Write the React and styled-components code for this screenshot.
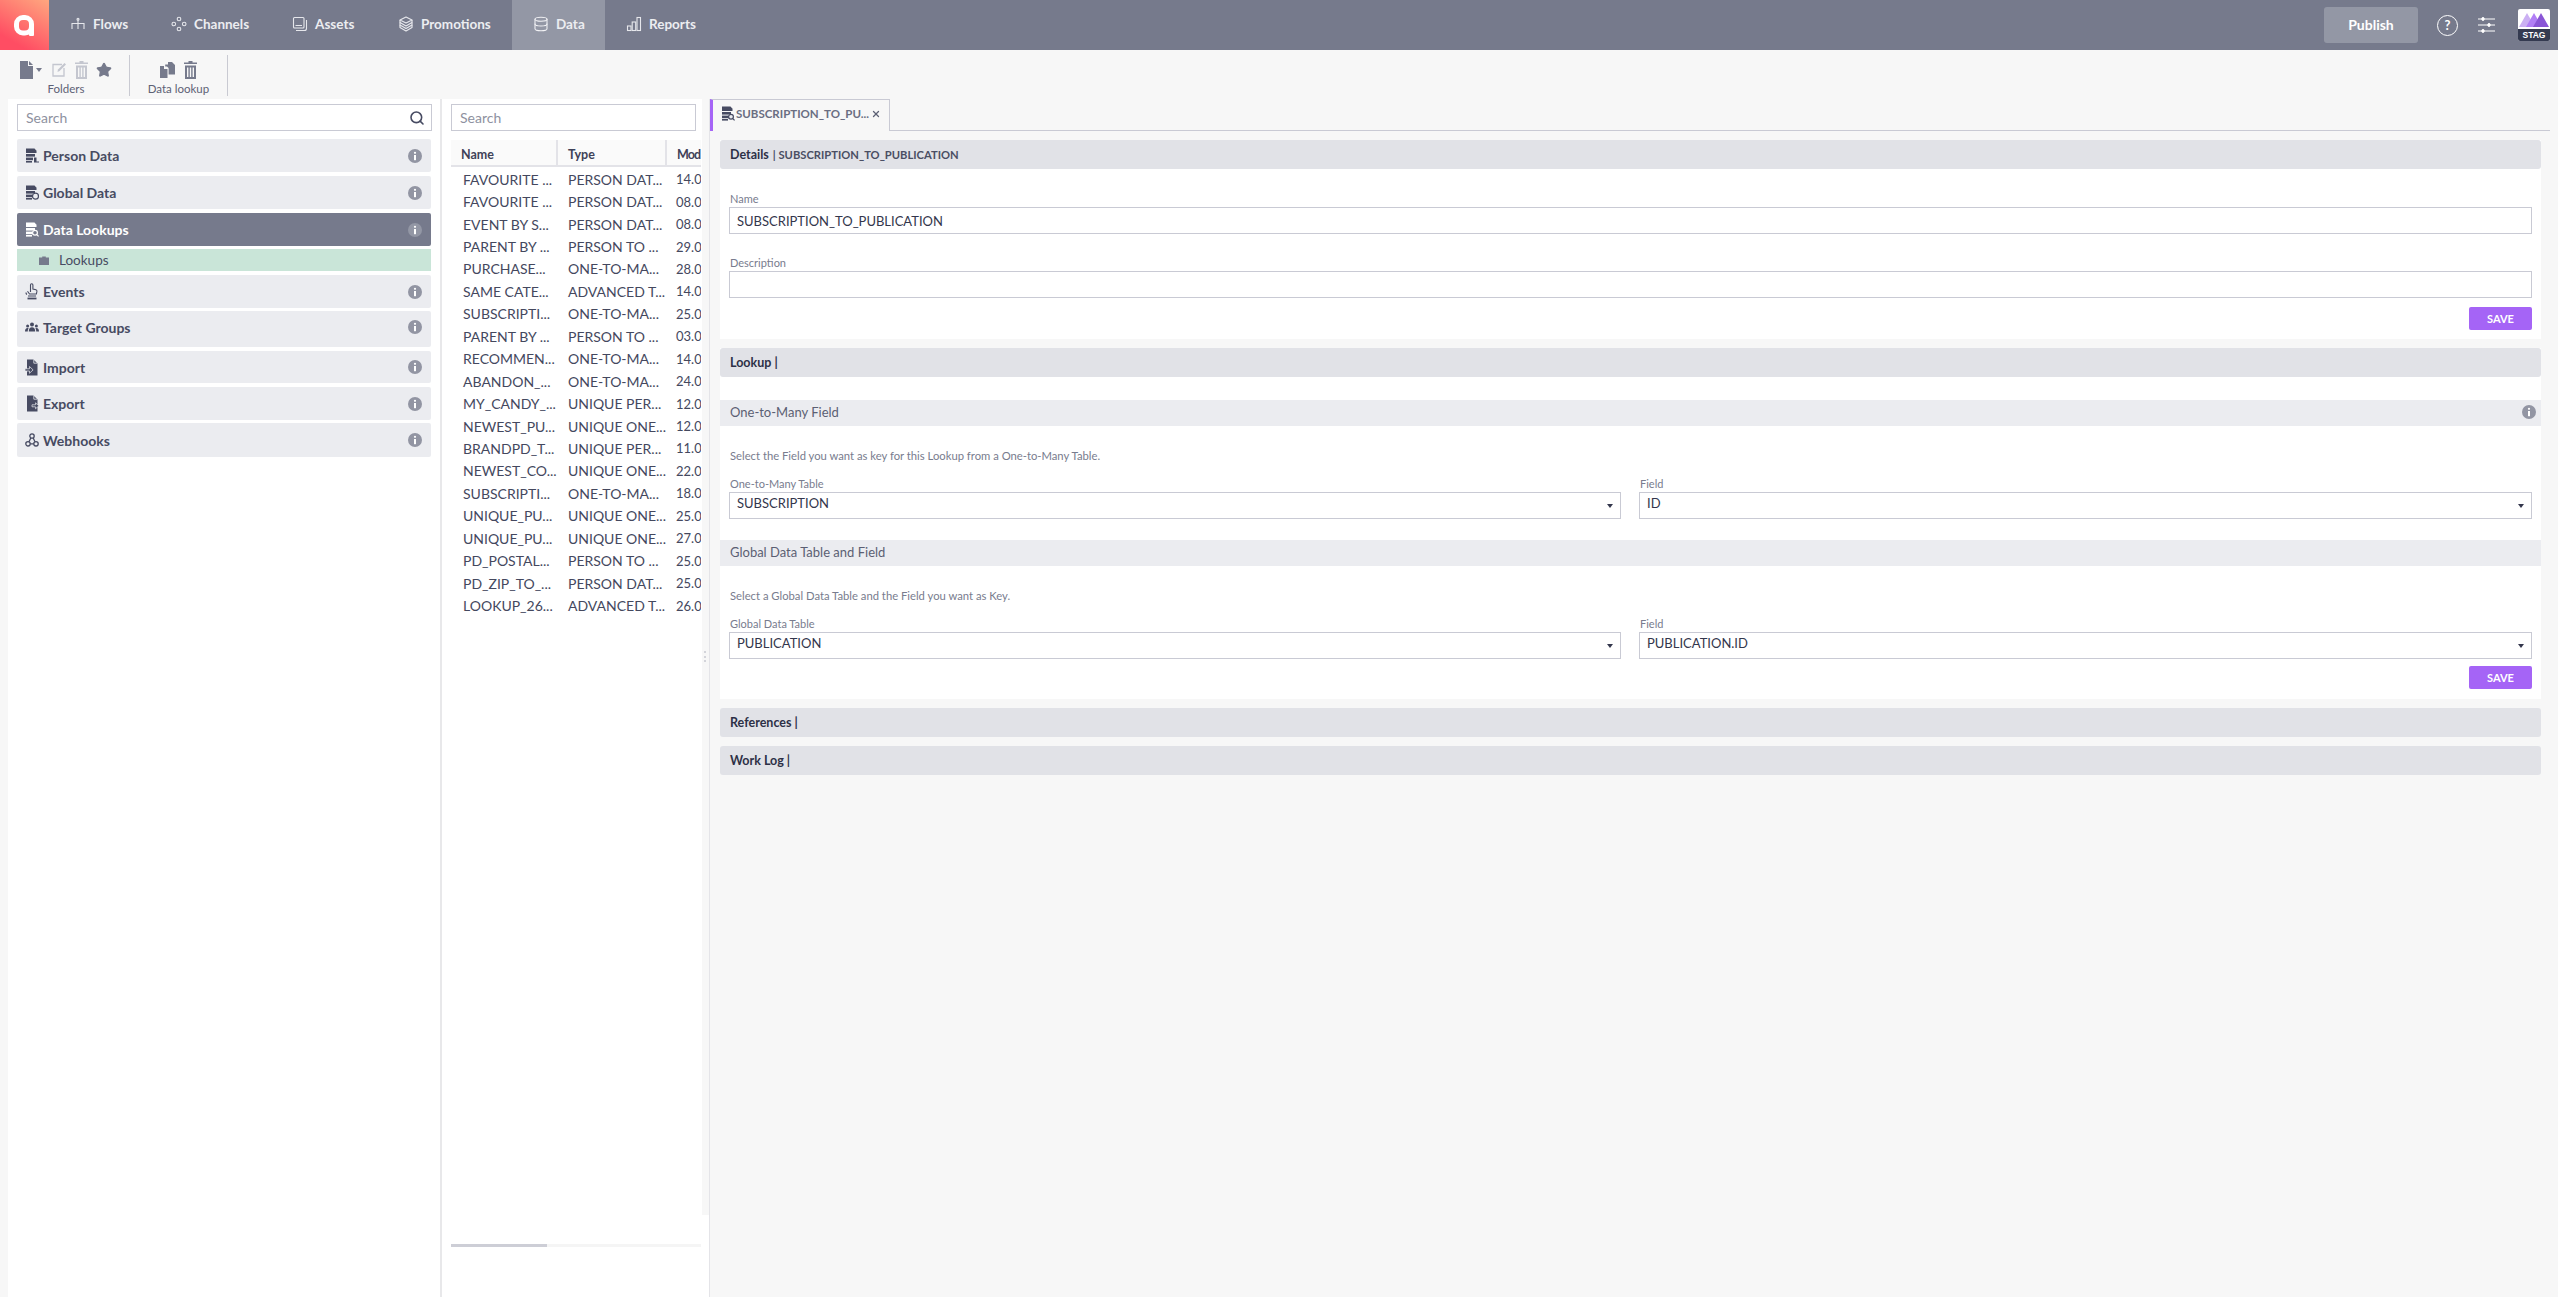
import React from "react";
import styled, { createGlobalStyle } from "styled-components";
import { Search, Database, X, Star } from "lucide-react";

const FONT = `Lato, "Noto Sans", "Liberation Sans", sans-serif`;

const NAV = [
  { label: "Flows", width: 101, icon: "flows" },
  { label: "Channels", width: 121, icon: "channels" },
  { label: "Assets", width: 106, icon: "assets" },
  { label: "Promotions", width: 135, icon: "promotions" },
  { label: "Data", width: 93, icon: "data", active: true },
  { label: "Reports", width: 113, icon: "reports" },
];

const MENU = [
  { label: "Person Data", icon: "person", height: 33 },
  { label: "Global Data", icon: "global", height: 33 },
  { label: "Data Lookups", icon: "lookup", height: 33, active: true },
  { label: "Events", icon: "events", height: 33 },
  { label: "Target Groups", icon: "groups", height: 36, pull: 1, lift: 4 },
  { label: "Import", icon: "import", height: 32 },
  { label: "Export", icon: "export", height: 33 },
  { label: "Webhooks", icon: "hooks", height: 34, pull: 1 },
];

const ROWS = [
  ["FAVOURITE ...", "PERSON DAT...", "14.0"],
  ["FAVOURITE ...", "PERSON DAT...", "08.0"],
  ["EVENT BY S...", "PERSON DAT...", "08.0"],
  ["PARENT BY ...", "PERSON TO ...", "29.0"],
  ["PURCHASE...", "ONE-TO-MA...", "28.0"],
  ["SAME CATE...", "ADVANCED T...", "14.0"],
  ["SUBSCRIPTI...", "ONE-TO-MA...", "25.0"],
  ["PARENT BY ...", "PERSON TO ...", "03.0"],
  ["RECOMMEN...", "ONE-TO-MA...", "14.0"],
  ["ABANDON_...", "ONE-TO-MA...", "24.0"],
  ["MY_CANDY_...", "UNIQUE PER...", "12.0"],
  ["NEWEST_PU...", "UNIQUE ONE...", "12.0"],
  ["BRANDPD_T...", "UNIQUE PER...", "11.0"],
  ["NEWEST_CO...", "UNIQUE ONE...", "22.0"],
  ["SUBSCRIPTI...", "ONE-TO-MA...", "18.0"],
  ["UNIQUE_PU...", "UNIQUE ONE...", "25.0"],
  ["UNIQUE_PU...", "UNIQUE ONE...", "27.0"],
  ["PD_POSTAL...", "PERSON TO ...", "25.0"],
  ["PD_ZIP_TO_...", "PERSON DAT...", "25.0"],
  ["LOOKUP_26...", "ADVANCED T...", "26.0"],
];

const NavIcon = ({ name }) => {
  const p = { width: 16, height: 16, viewBox: "0 0 16 16", fill: "none", stroke: "#e6e7ec", strokeWidth: 1.1 };
  if (name === "flows")
    return (
      <svg {...p}>
        <path d="M2 13V7.5h12V13M8 3.5V13" />
        <circle cx="8" cy="3.2" r="1" />
      </svg>
    );
  if (name === "channels")
    return (
      <svg {...p}>
        <circle cx="8" cy="3" r="1.8" />
        <circle cx="8" cy="13" r="1.8" />
        <circle cx="2.8" cy="8" r="1.8" />
        <circle cx="13.2" cy="8" r="1.8" />
      </svg>
    );
  if (name === "assets")
    return (
      <svg {...p}>
        <rect x="1.5" y="1.5" width="10.5" height="10.5" rx="1" />
        <path d="M4 14.5h8.5a2 2 0 0 0 2-2V4M3.5 9.5h6.5" />
      </svg>
    );
  if (name === "promotions")
    return (
      <svg {...p} strokeWidth="1.2" strokeLinejoin="round">
        <path d="M8 1 14 4 8 7 2 4z" />
        <path d="M2 4v2.5L8 10l6-3.5V4" />
        <path d="M2 6.5V9l6 3.5L14 9V6.5" />
        <path d="M2 9v2.5L8 15l6-3.5V9" />
      </svg>
    );
  if (name === "data") return <Database size={16} color="#f2f2f5" strokeWidth={1.6} />;
  return (
    <svg {...p}>
      <rect x="1.5" y="10" width="3.5" height="4.5" />
      <rect x="6.2" y="6" width="3.5" height="8.5" />
      <rect x="11" y="1.5" width="3.5" height="13" />
    </svg>
  );
};

const MenuIcon = ({ name, light }) => {
  const c = light ? "#ffffff" : "#474b62";
  const bg = light ? "#767a8c" : "#ebecf0";
  if (name === "events")
    return (
      <svg width="14" height="17" viewBox="0 0 14 17" fill="none" stroke={c} strokeWidth="1.1">
        <path d="M5.5 9V2a1.2 1.2 0 0 1 2.4 0v4l3 .8c.8.2 1.1.8 1 1.6L11.4 11H4.5L2.5 8.2" />
        <path d="M1 9.5a2 2 0 0 0 1 2M3 13h8" />
        <path d="M2.5 15.5h9" strokeWidth="1.8" />
      </svg>
    );
  if (name === "groups")
    return (
      <svg width="14" height="10" viewBox="0 0 14 10" fill={c}>
        <circle cx="7" cy="2.6" r="2" />
        <circle cx="2.6" cy="4" r="1.5" />
        <circle cx="11.4" cy="4" r="1.5" />
        <path d="M3.8 9.5c0-3 1.2-4.2 3.2-4.2s3.2 1.2 3.2 4.2zM0 9.5c0-2 .8-3.5 2.6-3.5.4 0 .7.1 1 .2C3 7 2.8 8 2.8 9.5zM14 9.5c0-2-.8-3.5-2.6-3.5-.4 0-.7.1-1 .2.6.8.8 1.8.8 3.3z" />
      </svg>
    );
  if (name === "import" || name === "export")
    return (
      <svg width="14" height="17" viewBox="0 0 14 17" fill={c}>
        <path d="M2 .5h6.5l4 4v12H2z" />
        <path d="M8.8.5v3.7h3.7" stroke={bg} strokeWidth=".8" fill="none" />
        {name === "import" ? (
          <path d="M0 9.8h4.5V7.5l3.6 3.4-3.6 3.4v-2.3H0z" stroke={bg} strokeWidth=".7" />
        ) : (
          <path d="M7 9.8h3.5V7.8l3.3 3-3.3 3v-2H7z" stroke={bg} strokeWidth=".7" />
        )}
      </svg>
    );
  if (name === "hooks")
    return (
      <svg width="14" height="14" viewBox="0 0 14 14" fill="none" stroke={c} strokeWidth="1.3">
        <circle cx="7" cy="3" r="2.2" />
        <circle cx="3" cy="10.8" r="2.2" />
        <circle cx="11" cy="10.8" r="2.2" />
        <path d="M5.8 5 4 8.8M8.2 5 10 8.8M5.2 10.8h3.6" />
      </svg>
    );
  return (
    <svg width="14" height="15" viewBox="0 0 14 15" fill={c}>
      <path d="M1 .5h8.5l2 2.2V5H1z" />
      <rect x="1" y="6" width="9" height="2.6" />
      <rect x="1" y="9.6" width="7" height="2.6" />
      <rect x="1" y="13" width="6" height="1.6" />
      {name === "person" && <path d="M9 9.5h2.5v4H14v1H9z" />}
      {name === "global" && <circle cx="10.5" cy="11.2" r="3" fill={bg} stroke={c} strokeWidth="1.2" />}
      {name === "lookup" && (
        <g fill="none" stroke={c} strokeWidth="1.2">
          <circle cx="10" cy="10.8" r="2.4" fill={bg} />
          <path d="m11.8 12.6 1.8 1.8" />
        </g>
      )}
    </svg>
  );
};

const InfoIcon = ({ light }) => (
  <svg width="14" height="14" viewBox="0 0 14 14">
    <circle cx="7" cy="7" r="7" fill={light ? "#9397a5" : "#9295a3"} />
    <circle cx="7" cy="3.8" r="1.1" fill="#fff" />
    <rect x="6" y="6" width="2" height="5.2" fill="#fff" />
  </svg>
);

const FileIcon = () => (
  <svg width="13" height="18" viewBox="0 0 13 18" fill="#767a8c">
    <path d="M0 0h8v5h5v13H0zM9 0l4 4H9z" />
  </svg>
);

const EditIcon = () => (
  <svg width="15" height="15" viewBox="0 0 15 15" fill="none" stroke="#c4c6cf" strokeWidth="1.3">
    <path d="M10 2.5H1v11.5h11V6" />
    <path d="M5.5 10l.5-2.5L12.5 1 14 2.5 7.6 9z" fill="#c4c6cf" stroke="none" />
  </svg>
);

const TrashIcon = ({ color }) => (
  <svg width="13" height="18" viewBox="0 0 13 18" fill={color}>
    <path d="M4.5 0h4v1.5H13V3H0V1.5h4.5z" />
    <path d="M1 4.5h11V18H1zM3 6.5V16h1.4V6.5zm2.8 0V16h1.4V6.5zm2.8 0V16H10V6.5z" fillRule="evenodd" />
  </svg>
);

const CopyIcon = () => (
  <svg width="15" height="16" viewBox="0 0 15 16" fill="#767a8c">
    <path d="M0 4h4v3h3.5v9H0zM8 0h4l3 3v9.5H8.6V6L7 4.5H5.2V2.5H8z" />
  </svg>
);

const FolderIcon = () => (
  <svg width="10" height="9" viewBox="0 0 10 9" fill="#767a8c">
    <path d="M0 1.5h3.2V.5h3.6v1H10V9H0z" />
  </svg>
);

const GlobalStyle = createGlobalStyle`
  html, body {
    margin: 0;
    padding: 0;
    background: #f7f7f7;
    font-family: ${FONT};
    color: #3f4258;
  }
  * {
    box-sizing: border-box;
  }
`;

const Page = styled.div`
  width: 2558px;
  height: 1297px;
  display: flex;
  flex-direction: column;
  overflow: hidden;
`;

const TopBar = styled.header`
  height: 50px;
  flex: none;
  display: flex;
  align-items: stretch;
  background: #767a8c;
`;

const Logo = styled.div`
  width: 49px;
  display: flex;
  align-items: center;
  justify-content: center;
  background: linear-gradient(30deg, #ff4d63 20%, #ffa77f 100%);
`;

const NavItem = styled.a`
  width: ${(props) => props.$width}px;
  padding: 0 0 2px 21px;
  display: flex;
  align-items: center;
  gap: 7px;
  font-size: 13.5px;
  font-weight: 700;
  color: #ecedf1;
  background: ${(props) => (props.$active ? "#9397a5" : "transparent")};
`;

const TopRight = styled.div`
  margin-left: auto;
  display: flex;
  align-items: center;
`;

const Publish = styled.button`
  width: 94px;
  height: 36px;
  margin-right: 19px;
  padding-bottom: 2px;
  border: 0;
  border-radius: 3px;
  background: #9397a5;
  color: #fff;
  font-family: ${FONT};
  font-size: 14px;
  font-weight: 700;
`;

const HelpIcon = styled.div`
  width: 21px;
  height: 21px;
  margin-right: 20px;
  display: flex;
  align-items: center;
  justify-content: center;
  border: 1.5px solid #fff;
  border-radius: 50%;
  color: #fff;
  font-size: 13px;
  font-weight: 700;
`;

const Stag = styled.div`
  width: 32px;
  height: 32px;
  margin: 0 8px 0 22px;
  display: flex;
  flex-direction: column;
  justify-content: space-between;
  overflow: hidden;
  border-radius: 2px;
  background: #fff;
`;

const StagBand = styled.div`
  height: 12px;
  background: #343a50;
  color: #fff;
  font-family: "Liberation Sans", sans-serif;
  font-size: 8.5px;
  font-weight: 700;
  line-height: 12px;
  text-align: center;
`;

const Toolbar = styled.div`
  height: 49px;
  flex: none;
  display: flex;
  align-items: flex-start;
`;

const ToolGroup = styled.div`
  width: ${(props) => props.$width}px;
  height: 41px;
  margin-top: 5px;
  padding: 5px 0 0 ${(props) => props.$left || 0}px;
  display: flex;
  flex-direction: column;
  align-items: center;
  gap: 3px;
  border-right: 1.5px solid #c9cad2;
`;

const ToolIcons = styled.div`
  height: 19px;
  display: flex;
  align-items: center;
  gap: ${(props) => props.$gap}px;
`;

const Caret = styled.span`
  width: 0;
  height: 0;
  margin: 0 ${(props) => props.$after || 0}px 0 ${(props) => props.$before || 0}px;
  flex: none;
  border-left: 3px solid transparent;
  border-right: 3px solid transparent;
  border-top: 4px solid ${(props) => props.$color || "#767a8c"};
`;

const ToolLabel = styled.span`
  font-size: 11.5px;
  line-height: 14px;
  color: #5d6175;
`;

const Main = styled.div`
  flex: 1;
  min-height: 0;
  display: flex;
`;

const LeftPanel = styled.aside`
  width: 434px;
  margin-left: 8px;
  flex: none;
  padding: 5px 9px 0;
  display: flex;
  flex-direction: column;
  gap: 4px;
  background: #fff;
  border-right: 2px solid #e8e8ea;
`;

const SearchBox = styled.label`
  width: ${(props) => props.$width}px;
  height: 27px;
  flex: none;
  margin-bottom: ${(props) => props.$bottom || 0}px;
  padding: 0 6px 0 8px;
  display: flex;
  align-items: center;
  background: #fff;
  border: 1.5px solid #c9cad4;
`;

const SearchInput = styled.input`
  flex: 1;
  min-width: 0;
  border: 0;
  outline: 0;
  padding: 0;
  font-family: ${FONT};
  font-size: 14px;
  &::placeholder {
    color: #8e91a0;
    opacity: 1;
  }
`;

const MenuRow = styled.div`
  height: ${(props) => props.$height}px;
  flex: none;
  margin-top: -${(props) => props.$pull || 0}px;
  padding: 0 9px ${(props) => props.$lift || 0}px 8px;
  display: flex;
  align-items: center;
  border-radius: 2px;
  background: ${(props) => (props.$active ? "#767a8c" : "#ebecf0")};
  color: ${(props) => (props.$active ? "#fff" : "#474b62")};
  font-size: 14px;
  font-weight: 700;
`;

const MenuIconSlot = styled.span`
  width: ${(props) => props.$width || 18}px;
  flex: none;
  display: flex;
  align-items: center;
`;

const MenuLabel = styled.span`
  flex: 1;
`;

const LookupRow = styled.div`
  height: 22px;
  width: 414px;
  margin: -1px 0 0;
  padding-left: 22px;
  flex: none;
  display: flex;
  align-items: center;
  gap: 10px;
  background: #c9e5d8;
  color: #474b62;
  font-size: 13.5px;
`;

const ListPanel = styled.section`
  width: 268px;
  flex: none;
  display: flex;
  flex-direction: column;
  border-right: 1px solid #e4e4e8;
  background: #fff;
`;

const ListInner = styled.div`
  flex: 1;
  min-height: 0;
  position: relative;
  padding: 5px 0 0 9px;
  background: linear-gradient(to left, #f7f7f7 7px, #fff 7px);
  background-size: 100% 1116px;
  background-repeat: no-repeat;
`;

const HeadRow = styled.div`
  width: 250px;
  height: 27px;
  margin: 9px 0 1px;
  display: grid;
  grid-template-columns: 107px 109px 34px;
  overflow: hidden;
  background: #fafafa;
  border-bottom: 2px solid #e3e3e8;
`;

const HeadCell = styled.div`
  padding: 7px 0 0 10px;
  border-right: ${(props) => (props.$last ? "0" : "2px solid #e3e3e8")};
  font-size: 12.5px;
  font-weight: 700;
  letter-spacing: ${(props) => (props.$last ? "-0.9px" : "0")};
  white-space: nowrap;
  color: #3f4258;
`;

const Row = styled.div`
  width: 250px;
  height: 22.45px;
  display: grid;
  grid-template-columns: 117px 108px 25px;
  align-items: center;
  overflow: hidden;
  font-size: 14px;
  color: #44485e;
  white-space: nowrap;
`;

const NameCell = styled.span`
  padding-left: 12px;
`;

const DateCell = styled.span`
  font-size: 13px;
`;

const HScroll = styled.div`
  position: absolute;
  left: 9px;
  top: 1145px;
  width: 250px;
  height: 3px;
  background: #f5f5f5;
`;

const HThumb = styled.div`
  width: 96px;
  height: 3px;
  background: #cdced6;
`;

const Grip = styled.div`
  position: absolute;
  right: 3px;
  top: 552px;
  width: 2px;
  height: 11px;
  background: repeating-linear-gradient(to bottom, #d3d4da 0 2px, transparent 2px 4.5px);
`;

const Work = styled.section`
  flex: 1;
  min-width: 0;
  display: flex;
  flex-direction: column;
`;

const TabStrip = styled.div`
  height: 32px;
  flex: none;
  margin-right: 8px;
  border-bottom: 1.5px solid #c9cad4;
`;

const Tab = styled.div`
  width: 180px;
  height: 32px;
  padding: 0 8px 4px 8px;
  display: flex;
  align-items: center;
  gap: 1px;
  border-top: 1.5px solid #c9cad4;
  border-right: 1.5px solid #c9cad4;
  border-left: 3px solid #a564f6;
  background: #f7f7f7;
  color: #6a6e82;
  font-size: 11.5px;
  font-weight: 700;
  white-space: nowrap;
`;

const TabTitle = styled.span`
  flex: 1;
`;

const Sections = styled.div`
  margin: 9px 17px 0 10px;
  display: flex;
  flex-direction: column;
  gap: 9px;
`;

const Section = styled.div`
  background: #fff;
`;

const SectionHead = styled.div`
  height: 29px;
  padding: 0 9px 0 10px;
  display: flex;
  align-items: center;
  gap: 4px;
  border-radius: 3px;
  background: #e1e2e7;
  color: #2d3046;
  font-size: 12.5px;
  font-weight: 700;
`;

const HeadExtra = styled.span`
  color: #4a4e63;
  font-size: 11.2px;
`;

const SectionBody = styled.div`
  padding: ${(props) => props.$top}px 9px ${(props) => props.$bottom}px;
`;

const SubHead = styled.div`
  height: 26px;
  margin: ${(props) => props.$top}px 0 0;
  padding: 0 5px 2px 10px;
  display: flex;
  align-items: center;
  justify-content: space-between;
  background: #ebecf0;
  color: #5b5f73;
  font-size: 13px;
`;

const SubBody = styled.div`
  padding: 21px 9px ${(props) => props.$bottom || 0}px;
`;

const Hint = styled.p`
  height: 17px;
  margin: 0 0 13px 1px;
  font-size: 11.25px;
  line-height: 17px;
  color: #787c8e;
`;

const Field = styled.div`
  flex: 1;
  margin-top: ${(props) => props.$top || 0}px;
`;

const FieldLabel = styled.div`
  height: 15px;
  padding-left: 1px;
  font-size: 11px;
  line-height: 14px;
  color: #787c8e;
`;

const Value = styled.div`
  height: 27px;
  padding: 0 7px 0 7px;
  display: flex;
  align-items: center;
  justify-content: space-between;
  border: 1.5px solid #c9cad4;
  background: #fff;
  font-size: 13px;
  color: #33364c;
`;

const FieldRow = styled.div`
  display: grid;
  grid-template-columns: 892px 893px;
  justify-content: space-between;
`;

const Actions = styled.div`
  margin-top: ${(props) => props.$top}px;
  display: flex;
  justify-content: flex-end;
`;

const Save = styled.button`
  width: 63px;
  height: 23px;
  border: 0;
  border-radius: 2px;
  background: #a564f6;
  color: #fff;
  font-family: ${FONT};
  font-size: 11px;
  font-weight: 700;
`;

const SelectValue = styled.span`
  margin-top: -5px;
`;

const Select = ({ value }) => (
  <Value>
    <SelectValue>{value}</SelectValue>
    <Caret $color="#33364c" />
  </Value>
);

export default function App() {
  return (
    <Page>
      <GlobalStyle />
      <TopBar>
        <Logo>
          <svg width="21" height="21" viewBox="0 0 21 21" fill="none">
            <rect x="2.5" y="2.5" width="15" height="15.5" rx="6.5" stroke="#fff" strokeWidth="5" />
            <rect x="15" y="9" width="5" height="12" rx="1" fill="#fff" />
          </svg>
        </Logo>
        {NAV.map((item) => (
          <NavItem key={item.label} $width={item.width} $active={item.active}>
            <NavIcon name={item.icon} />
            {item.label}
          </NavItem>
        ))}
        <TopRight>
          <Publish>Publish</Publish>
          <HelpIcon>?</HelpIcon>
          <svg width="18" height="16" viewBox="0 0 18 16" stroke="#fff" strokeWidth="1" fill="#fff">
            <path d="M0 2h3M7 2h10M0 8h9M13 8h4M0 14h3M7 14h10" />
            <circle cx="5" cy="2" r="1.4" />
            <circle cx="11" cy="8" r="1.4" />
            <circle cx="5" cy="14" r="1.4" />
          </svg>
          <Stag>
            <svg width="32" height="18" viewBox="0 0 32 18">
              <path d="M1 18 9 4l8 14z" fill="#cbb0f3" />
              <path d="M8 18 16 4l8 14z" fill="#b17ff5" />
              <path d="M15 18 23 4l8 14z" fill="#8a56d6" />
            </svg>
            <StagBand>STAG</StagBand>
          </Stag>
        </TopRight>
      </TopBar>

      <Toolbar>
        <ToolGroup $width={130} $left={3}>
          <ToolIcons $gap={8}>
            <FileIcon />
            <Caret $before={-5} $after={2} />
            <EditIcon />
            <TrashIcon color="#c4c6cf" />
            <Star size={16} fill="#767a8c" color="#767a8c" />
          </ToolIcons>
          <ToolLabel>Folders</ToolLabel>
        </ToolGroup>
        <ToolGroup $width={98}>
          <ToolIcons $gap={9}>
            <CopyIcon />
            <TrashIcon color="#767a8c" />
          </ToolIcons>
          <ToolLabel>Data lookup</ToolLabel>
        </ToolGroup>
      </Toolbar>

      <Main>
        <LeftPanel>
          <SearchBox $width={415} $bottom={4}>
            <SearchInput placeholder="Search" />
            <Search size={16} color="#474b62" strokeWidth={2.4} />
          </SearchBox>
          {MENU.map((item) => (
            <React.Fragment key={item.label}>
              <MenuRow $height={item.height} $active={item.active} $pull={item.pull} $lift={item.lift}>
                <MenuIconSlot>
                  <MenuIcon name={item.icon} light={item.active} />
                </MenuIconSlot>
                <MenuLabel>{item.label}</MenuLabel>
                <InfoIcon light={item.active} />
              </MenuRow>
              {item.active && (
                <LookupRow>
                  <FolderIcon />
                  Lookups
                </LookupRow>
              )}
            </React.Fragment>
          ))}
        </LeftPanel>

        <ListPanel>
          <ListInner>
            <SearchBox $width={245}>
              <SearchInput placeholder="Search" />
            </SearchBox>
            <HeadRow>
              <HeadCell>Name</HeadCell>
              <HeadCell>Type</HeadCell>
              <HeadCell $last>Mod</HeadCell>
            </HeadRow>
            {ROWS.map((row, i) => (
              <Row key={i}>
                <NameCell>{row[0]}</NameCell>
                <span>{row[1]}</span>
                <DateCell>{row[2]}</DateCell>
              </Row>
            ))}
            <Grip />
            <HScroll>
              <HThumb />
            </HScroll>
          </ListInner>
        </ListPanel>

        <Work>
          <TabStrip>
            <Tab>
              <MenuIconSlot $width={14}>
                <MenuIcon name="lookup" />
              </MenuIconSlot>
              <TabTitle>SUBSCRIPTION_TO_PU...</TabTitle>
              <X size={10} color="#5d6175" strokeWidth={3} />
            </Tab>
          </TabStrip>
          <Sections>
            <Section>
              <SectionHead>
                Details <HeadExtra>| SUBSCRIPTION_TO_PUBLICATION</HeadExtra>
              </SectionHead>
              <SectionBody $top={23} $bottom={9}>
                <Field>
                  <FieldLabel>Name</FieldLabel>
                  <Value>SUBSCRIPTION_TO_PUBLICATION</Value>
                </Field>
                <Field $top={22}>
                  <FieldLabel>Description</FieldLabel>
                  <Value />
                </Field>
                <Actions $top={9}>
                  <Save>SAVE</Save>
                </Actions>
              </SectionBody>
            </Section>

            <Section>
              <SectionHead>Lookup |</SectionHead>
              <SubHead $top={23}>
                One-to-Many Field
                <InfoIcon />
              </SubHead>
              <SubBody>
                <Hint>Select the Field you want as key for this Lookup from a One-to-Many Table.</Hint>
                <FieldRow>
                  <Field>
                    <FieldLabel>One-to-Many Table</FieldLabel>
                    <Select value="SUBSCRIPTION" />
                  </Field>
                  <Field>
                    <FieldLabel>Field</FieldLabel>
                    <Select value="ID" />
                  </Field>
                </FieldRow>
              </SubBody>
              <SubHead $top={21}>Global Data Table and Field</SubHead>
              <SubBody $bottom={10}>
                <Hint>Select a Global Data Table and the Field you want as Key.</Hint>
                <FieldRow>
                  <Field>
                    <FieldLabel>Global Data Table</FieldLabel>
                    <Select value="PUBLICATION" />
                  </Field>
                  <Field>
                    <FieldLabel>Field</FieldLabel>
                    <Select value="PUBLICATION.ID" />
                  </Field>
                </FieldRow>
                <Actions $top={7}>
                  <Save>SAVE</Save>
                </Actions>
              </SubBody>
            </Section>

            <SectionHead>References |</SectionHead>
            <SectionHead>Work Log |</SectionHead>
          </Sections>
        </Work>
      </Main>
    </Page>
  );
}
